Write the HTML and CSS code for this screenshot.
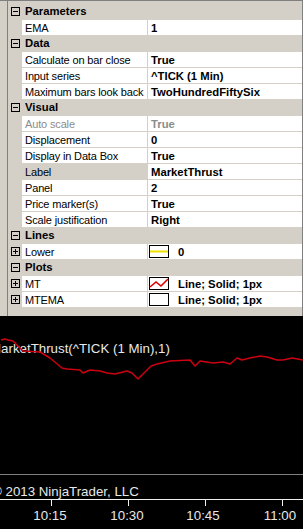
FILE: index.html
```html
<!DOCTYPE html>
<html lang="en">
  <head>
    <meta charset="UTF-8">
    <title>Indicator properties</title>
    <link rel="stylesheet" href="styles.css">
  </head>
  <body>
  <div class="window">
    <div class="props">
      <div class="row cat">
        <span class="gut"><svg class="tog" width="9" height="9"><rect x="0.5" y="0.5" width="8" height="8" fill="none" stroke="#000"/><path d="M2 4.5h5" stroke="#000"/></svg></span>
        <span class="cat-name">Parameters</span>
      </div>
      <div class="row">
        <span class="gut"></span><span class="name">EMA</span><span class="val">1</span>
      </div>

      <div class="row cat">
        <span class="gut"><svg class="tog" width="9" height="9"><rect x="0.5" y="0.5" width="8" height="8" fill="none" stroke="#000"/><path d="M2 4.5h5" stroke="#000"/></svg></span>
        <span class="cat-name">Data</span>
      </div>
      <div class="row">
        <span class="gut"></span><span class="name">Calculate on bar close</span><span class="val">True</span>
      </div>
      <div class="row">
        <span class="gut"></span><span class="name">Input series</span><span class="val">^TICK (1 Min)</span>
      </div>
      <div class="row">
        <span class="gut"></span><span class="name">Maximum bars look back</span><span class="val">TwoHundredFiftySix</span>
      </div>

      <div class="row cat">
        <span class="gut"><svg class="tog" width="9" height="9"><rect x="0.5" y="0.5" width="8" height="8" fill="none" stroke="#000"/><path d="M2 4.5h5" stroke="#000"/></svg></span>
        <span class="cat-name">Visual</span>
      </div>
      <div class="row disabled">
        <span class="gut"></span><span class="name">Auto scale</span><span class="val">True</span>
      </div>
      <div class="row">
        <span class="gut"></span><span class="name">Displacement</span><span class="val">0</span>
      </div>
      <div class="row">
        <span class="gut"></span><span class="name">Display in Data Box</span><span class="val">True</span>
      </div>
      <div class="row selected">
        <span class="gut"></span><span class="name">Label</span><span class="val">MarketThrust</span>
      </div>
      <div class="row">
        <span class="gut"></span><span class="name">Panel</span><span class="val">2</span>
      </div>
      <div class="row">
        <span class="gut"></span><span class="name">Price marker(s)</span><span class="val">True</span>
      </div>
      <div class="row">
        <span class="gut"></span><span class="name">Scale justification</span><span class="val">Right</span>
      </div>

      <div class="row cat">
        <span class="gut"><svg class="tog" width="9" height="9"><rect x="0.5" y="0.5" width="8" height="8" fill="none" stroke="#000"/><path d="M2 4.5h5" stroke="#000"/></svg></span>
        <span class="cat-name">Lines</span>
      </div>
      <div class="row">
        <span class="gut"><svg class="tog" width="9" height="9"><rect x="0.5" y="0.5" width="8" height="8" fill="none" stroke="#000"/><path d="M2 4.5h5M4.5 2v5" stroke="#000"/></svg></span>
        <span class="name">Lower</span>
        <span class="val swatch-val">
          <svg class="swatch" width="20" height="13"><rect x="0.5" y="0.5" width="19" height="12" fill="#fff" stroke="#000"/><path d="M1 6.5h18" stroke="#f0e000" stroke-width="2"/></svg>
          <span>0</span>
        </span>
      </div>

      <div class="row cat">
        <span class="gut"><svg class="tog" width="9" height="9"><rect x="0.5" y="0.5" width="8" height="8" fill="none" stroke="#000"/><path d="M2 4.5h5" stroke="#000"/></svg></span>
        <span class="cat-name">Plots</span>
      </div>
      <div class="row">
        <span class="gut"><svg class="tog" width="9" height="9"><rect x="0.5" y="0.5" width="8" height="8" fill="none" stroke="#000"/><path d="M2 4.5h5M4.5 2v5" stroke="#000"/></svg></span>
        <span class="name">MT</span>
        <span class="val swatch-val">
          <svg class="swatch" width="20" height="13"><rect x="0.5" y="0.5" width="19" height="12" fill="#fff" stroke="#000"/><polyline points="1,10 7,5 12,9 19,2" fill="none" stroke="#e00000" stroke-width="1.6"/></svg>
          <span>Line; Solid; 1px</span>
        </span>
      </div>
      <div class="row">
        <span class="gut"><svg class="tog" width="9" height="9"><rect x="0.5" y="0.5" width="8" height="8" fill="none" stroke="#000"/><path d="M2 4.5h5M4.5 2v5" stroke="#000"/></svg></span>
        <span class="name">MTEMA</span>
        <span class="val swatch-val">
          <svg class="swatch" width="20" height="13"><rect x="0.5" y="0.5" width="19" height="12" fill="#fff" stroke="#000"/></svg>
          <span>Line; Solid; 1px</span>
        </span>
      </div>
    </div>

    <div class="chart">
      <svg width="303" height="213" viewBox="0 0 303 213">
        <text class="plot-label" x="-10" y="37">MarketThrust(^TICK (1 Min),1)</text>
        <polyline class="plot" points="1,24 5,23 8,24 13,25 23,35 40,36 50,42 62,52 67,53 80,54 83,57 90,54 100,55 107,57 115,58 127,55 132,57 138,63 143,58 151,50 157,48 170,45 190,44 195,50 200,45 213,47 223,46 230,48 237,42 242,44 250,42 260,40 267,41 277,44 283,44 292,42 303,44"/>
        <line class="sep" x1="0" y1="158.5" x2="303" y2="158.5"/>
        <text class="copy" x="-8" y="180">© 2013 NinjaTrader, LLC</text>
        <line class="axis" x1="0" y1="183.5" x2="303" y2="183.5"/>
        <line class="axis" x1="51.5" y1="183" x2="51.5" y2="190"/>
        <line class="axis" x1="128.5" y1="183" x2="128.5" y2="190"/>
        <line class="axis" x1="205.5" y1="183" x2="205.5" y2="190"/>
        <line class="axis" x1="282.5" y1="183" x2="282.5" y2="190"/>
        <text class="tick" x="50" y="204">10:15</text>
        <text class="tick" x="127" y="204">10:30</text>
        <text class="tick" x="203" y="204">10:45</text>
        <text class="tick" x="280" y="204">11:00</text>
      </svg>
    </div>
  </div>
  </body>
</html>
```

FILE: styles.css
```css
body {
  margin: 0;
  width: 303px;
  height: 529px;
  overflow: hidden;
  background-color: #d4d0c8;
  font-family: "Liberation Sans", Arial, sans-serif;
}

.window {
  border-top: 1px solid #808080;
}

.props {
  margin-left: 7px;
  border-left: 1px solid #808080;
  border-right: 1px solid #808080;
  padding-top: 2px;
  padding-bottom: 9px;
  display: flex;
  flex-direction: column;
}

.row {
  display: flex;
  height: 16px;
  font-size: 11px;
  letter-spacing: -0.15px;
  line-height: 16px;
  color: #000;
}

.gut {
  width: 14px;
  flex: none;
  display: flex;
  align-items: center;
  padding-left: 3px;
  box-sizing: border-box;
}

.tog {
  display: block;
  margin-top: 1px;
}

.name {
  width: 125px;
  flex: none;
  box-sizing: border-box;
  padding-left: 3px;
  background-color: #fff;
  border-top: 1px solid #d4d0c8;
  white-space: nowrap;
  overflow: hidden;
}

.val {
  flex: 1;
  margin-left: 1px;
  padding-left: 3px;
  background-color: #fff;
  border-top: 1px solid #d4d0c8;
  font-weight: bold;
  font-size: 11.3px;
  letter-spacing: 0;
  white-space: nowrap;
  overflow: hidden;
}

.cat-name {
  padding-left: 3px;
  font-weight: bold;
  font-size: 11.3px;
  letter-spacing: 0;
  line-height: 17px;
}

.row.selected .name {
  background-color: #d4d0c8;
}

.row.disabled .name,
.row.disabled .val {
  color: #8c8c8c;
}

.swatch-val {
  display: flex;
  align-items: center;
  padding-left: 1px;
}

.swatch {
  display: block;
  flex: none;
}

.swatch + span {
  margin-left: 9px;
}

.chart {
  background-color: #000;
  height: 213px;
}

.chart svg {
  display: block;
}

.plot {
  fill: none;
  stroke: #cc0010;
  stroke-width: 1.5;
  stroke-linejoin: round;
}

.plot-label,
.copy,
.tick {
  font-family: "Liberation Sans", Arial, sans-serif;
  font-size: 13.3px;
  fill: #e8e8e8;
}

.tick {
  text-anchor: middle;
}

.sep {
  stroke: #808080;
  stroke-width: 1;
}

.axis {
  stroke: #f0f0f0;
  stroke-width: 1;
}
```
